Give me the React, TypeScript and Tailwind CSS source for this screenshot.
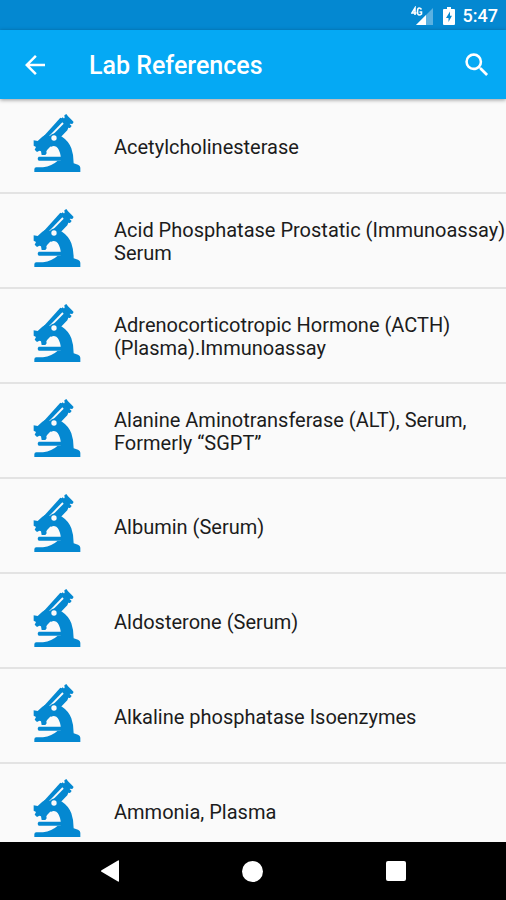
import { FC } from "react";

const labTests = [
  "Acetylcholinesterase",
  "Acid Phosphatase Prostatic (Immunoassay) Serum",
  "Adrenocorticotropic Hormone (ACTH) (Plasma).Immunoassay",
  "Alanine Aminotransferase (ALT), Serum, Formerly “SGPT”",
  "Albumin (Serum)",
  "Aldosterone (Serum)",
  "Alkaline phosphatase Isoenzymes",
  "Ammonia, Plasma",
];

const MicroscopeIcon: FC = () => (
  <svg
    viewBox="9 13 144 174"
    className="h-[58px] w-12 flex-none text-[#0488d1]"
    fill="currentColor"
    aria-hidden="true"
  >
    {/* eyepiece and tube */}
    <path d="M103 17l6-4 5 7 12 12 5 5-4 6-7-1-5 4-17-16 6-6z" />
    <path d="M92 29l6-6 27 26-5 6-5-1-3 8-26 27-32-9z" />
    <path d="M91 24l9 4-50 59-9-7z" />
    <path d="M97 38l4 4-39 40-4-4z" fill="#fafafa" />
    {/* objectives */}
    <path d="M11 92l12 2 14-13 9-6 14 5 32 14-12 14-18 2-10 10-3 5 1 6-4 5H35l-2-11-5-2-7 4-7-7 4-8-7-4z" />
    {/* arm */}
    <path d="M58 82q6-13 22-10l16 9q20 13 28 35 7 19 7 45l13 4q7 3 7 9v14H13v-9q0-6 6-6h20q27-4 44-20h9v-14q-3-20-13-28-9-5-17 1z" />
    <path d="M26 141h72v12H26q-6-6 0-12z" />
    <circle cx="72" cy="85" r="8" fill="#fafafa" />
  </svg>
);

const StatusBar: FC = () => (
  <div className="flex h-[30px] flex-none items-center justify-end bg-[#0488d1] pt-px pr-2 text-white">
    <svg
      viewBox="0 0 24 20"
      className="h-5 w-6"
      fill="currentColor"
      role="img"
      aria-label="4G signal"
    >
      <path d="M22 2v17H5z" opacity=".35" />
      <path d="M15 9v10H5z" />
      <path
        d="M4 9V2L1 7h4.500M10.500 3.500q-1-1.500-2.300-1.500-1.700 0-1.700 3.500t1.700 3.500q1.300 0 2.300-1V6H8.500"
        fill="none"
        stroke="currentColor"
        strokeWidth="1.600"
      />
    </svg>
    <svg
      viewBox="0 0 12 18"
      className="ml-2 h-[18px] w-3"
      fill="currentColor"
      role="img"
      aria-label="Battery charging"
    >
      <path d="M4 0h4v2h3q1 0 1 1v14q0 1-1 1H1q-1 0-1-1V3q0-1 1-1h3z" />
      <path d="M7 4.500L3 11h2.500v4L9 8.700H7z" fill="#0488d1" />
    </svg>
    <span className="ml-2 text-lg leading-6 font-medium">5:47</span>
  </div>
);

const AppBar: FC = () => (
  <header className="relative z-10 flex h-[69px] flex-none items-center bg-[#05a9f4] pr-4 pl-[23px] text-white shadow-[0_1px_4px_rgba(0,0,0,0.4)]">
    <button type="button" aria-label="Back" className="flex-none">
      <svg viewBox="4 4 16 16" className="size-6 p-0.5" fill="currentColor">
        <path d="M20 11H7.830l5.590-5.590L12 4l-8 8 8 8 1.410-1.410L7.830 13H20v-2z" />
      </svg>
    </button>
    <h1 className="ml-[42px] flex-1 pt-0.5 text-[25px] leading-8 font-medium">
      Lab References
    </h1>
    <button type="button" aria-label="Search" className="flex-none">
      <svg viewBox="2 2 20 20" className="size-[26px]" fill="currentColor">
        <path d="M15.500 14h-.79l-.28-.27A6.471 6.471 0 0 0 16 9.500 6.500 6.500 0 1 0 9.500 16c1.610 0 3.090-.59 4.230-1.570l.27.28v.79l5 4.990L20.490 19l-4.990-5zm-6 0C7.010 14 5 11.990 5 9.500S7.010 5 9.500 5 14 7.010 14 9.500 11.990 14 9.500 14z" />
      </svg>
    </button>
  </header>
);

const NavBar: FC = () => (
  <nav className="grid h-[58px] flex-none grid-cols-3 place-items-center bg-black px-[38px] text-white">
    <button type="button" aria-label="Back">
      <svg viewBox="0 0 18 22" className="h-[22px] w-[18px]" fill="currentColor">
        <path d="M17 .5q1-.5 1 .5v20q0 1-1 .5L.5 11.800q-1-.8 0-1.600z" />
      </svg>
    </button>
    <button
      type="button"
      aria-label="Home"
      className="size-[21px] rounded-full bg-white"
    />
    <button
      type="button"
      aria-label="Overview"
      className="size-5 rounded-xs bg-white"
    />
  </nav>
);

const App: FC = () => {
  return (
    <div className="flex h-dvh flex-col bg-[#fafafa] font-[Roboto,sans-serif]">
      <StatusBar />
      <AppBar />
      <main className="min-h-0 flex-1 overflow-y-auto [scrollbar-width:none]">
        <ul>
          {labTests.map((name) => (
            <li key={name} className="border-b-2 border-[#e3e3e3]">
              <a
                href="#"
                className="flex min-h-[93px] items-start gap-[33px] pt-[15px] pb-5 pl-[33px] text-xl leading-[23px] text-[#1c1c1c]"
              >
                <MicroscopeIcon />
                <span className="self-center pt-2">{name}</span>
              </a>
            </li>
          ))}
        </ul>
      </main>
      <NavBar />
    </div>
  );
};

export default App;
